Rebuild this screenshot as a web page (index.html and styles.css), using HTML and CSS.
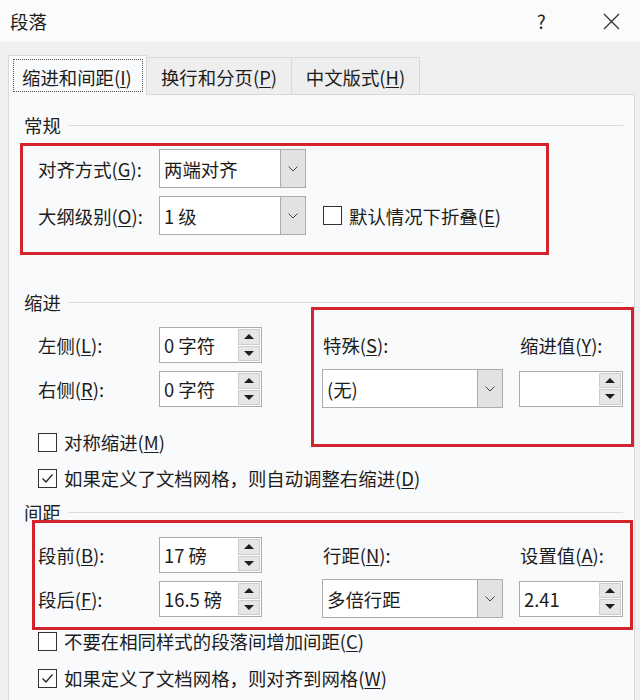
FILE: index.html
```html
<!DOCTYPE html>
<html lang="zh-CN">
<head>
<meta charset="utf-8">
<title>段落</title>
<link rel="stylesheet" href="styles.css">
</head>
<body>
<div class="titlebar">
  <span class="title">段落</span>
  <span class="help">?</span>
  <span class="close"><svg width="17" height="17" viewBox="0 0 17 17"><path d="M1 1 L16 16 M16 1 L1 16" stroke="#333" stroke-width="1.3" fill="none"/></svg></span>
</div>
<div class="tabstrip">
  <div class="tab active"><span class="focus">缩进和间距(<u>I</u>)</span></div>
  <div class="tab t2">换行和分页(<u>P</u>)</div>
  <div class="tab t3">中文版式(<u>H</u>)</div>
</div>
<div class="panel">
  <div class="group-title g1"><span>常规</span></div>
  <div class="frow gen first">
    <span class="lbl">对齐方式(<u>G</u>):</span>
    <div class="combo"><span class="val">两端对齐</span><span class="dd"><svg width="10" height="6" viewBox="0 0 10 6"><path d="M0.5 0.5 L5 5 L9.5 0.5" stroke="#444" stroke-width="1" fill="none"/></svg></span></div>
  </div>
  <div class="frow gen second">
    <span class="lbl">大纲级别(<u>O</u>):</span>
    <div class="combo"><span class="val">1 级</span><span class="dd"><svg width="10" height="6" viewBox="0 0 10 6"><path d="M0.5 0.5 L5 5 L9.5 0.5" stroke="#444" stroke-width="1" fill="none"/></svg></span></div>
    <span class="cb collapse"></span><span class="cbtext">默认情况下折叠(<u>E</u>)</span>
  </div>

  <div class="group-title g2"><span>缩进</span></div>
  <div class="block b-indent">
    <div class="leftcol">
      <div class="frow">
        <span class="lbl">左侧(<u>L</u>):</span>
        <div class="spin"><span class="val">0 字符</span><span class="btns"><span class="sb"><i class="up"></i></span><span class="sb"><i class="down"></i></span></span></div>
      </div>
      <div class="frow r2">
        <span class="lbl">右侧(<u>R</u>):</span>
        <div class="spin"><span class="val">0 字符</span><span class="btns"><span class="sb"><i class="up"></i></span><span class="sb"><i class="down"></i></span></span></div>
      </div>
    </div>
    <div class="rightcol">
      <span class="lbl2">特殊(<u>S</u>):</span>
      <span class="lbl2">缩进值(<u>Y</u>):</span>
      <div class="combo wide"><span class="val">(无)</span><span class="dd"><svg width="10" height="6" viewBox="0 0 10 6"><path d="M0.5 0.5 L5 5 L9.5 0.5" stroke="#444" stroke-width="1" fill="none"/></svg></span></div>
      <div class="spin small"><span class="val"></span><span class="btns"><span class="sb"><i class="up"></i></span><span class="sb"><i class="down"></i></span></span></div>
    </div>
  </div>
  <div class="crow c1"><span class="cb"></span><span class="cbtext">对称缩进(<u>M</u>)</span></div>
  <div class="crow c2"><span class="cb checked"><svg width="17" height="17" viewBox="0 0 17 17"><path d="M3.5 8.5 L7 12 L13.5 4.5" stroke="#222" stroke-width="1.2" fill="none"/></svg></span><span class="cbtext">如果定义了文档网格，则自动调整右缩进(<u>D</u>)</span></div>

  <div class="group-title g3"><span>间距</span></div>
  <div class="block b-space">
    <div class="leftcol">
      <div class="frow">
        <span class="lbl">段前(<u>B</u>):</span>
        <div class="spin"><span class="val">17 磅</span><span class="btns"><span class="sb"><i class="up"></i></span><span class="sb"><i class="down"></i></span></span></div>
      </div>
      <div class="frow r2">
        <span class="lbl">段后(<u>F</u>):</span>
        <div class="spin"><span class="val">16.5 磅</span><span class="btns"><span class="sb"><i class="up"></i></span><span class="sb"><i class="down"></i></span></span></div>
      </div>
    </div>
    <div class="rightcol">
      <span class="lbl2">行距(<u>N</u>):</span>
      <span class="lbl2">设置值(<u>A</u>):</span>
      <div class="combo wide"><span class="val">多倍行距</span><span class="dd"><svg width="10" height="6" viewBox="0 0 10 6"><path d="M0.5 0.5 L5 5 L9.5 0.5" stroke="#444" stroke-width="1" fill="none"/></svg></span></div>
      <div class="spin small"><span class="val">2.41</span><span class="btns"><span class="sb"><i class="up"></i></span><span class="sb"><i class="down"></i></span></span></div>
    </div>
  </div>
  <div class="crow c3"><span class="cb"></span><span class="cbtext">不要在相同样式的段落间增加间距(<u>C</u>)</span></div>
  <div class="crow c4"><span class="cb checked"><svg width="17" height="17" viewBox="0 0 17 17"><path d="M3.5 8.5 L7 12 L13.5 4.5" stroke="#222" stroke-width="1.2" fill="none"/></svg></span><span class="cbtext">如果定义了文档网格，则对齐到网格(<u>W</u>)</span></div>

  <div class="mark m1"></div>
  <div class="mark m2"></div>
  <div class="mark m3"></div>
</div>
</body>
</html>
```

FILE: styles.css
```css
* { box-sizing: border-box; }
html, body { margin: 0; padding: 0; }
body {
  width: 640px;
  height: 700px;
  overflow: hidden;
  background: #f0f0f0;
  font-family: "Noto Sans CJK SC", "Noto Sans", sans-serif;
  font-size: 18.4px;
  color: #1c1c1c;
}
u {
  text-decoration: underline;
  text-decoration-thickness: 1px;
  text-underline-offset: 2px;
}

/* title bar */
.titlebar {
  height: 42px;
  background: #fbfbfb;
  display: flex;
  align-items: center;
}
.title { flex: 1; padding-left: 10px; }
.help { width: 10px; margin-right: 56px; color: #222; }
.close { width: 17px; height: 17px; margin-right: 20px; display: flex; }

/* tabs */
.tabstrip {
  height: 52px;
  padding-left: 8px;
  display: flex;
  align-items: flex-end;
}
.tab {
  height: 37px;
  border: 1px solid #d9d9d9;
  border-bottom: none;
  border-left: none;
  background: #eeeeee;
  display: flex;
  align-items: center;
  justify-content: center;
  padding-top: 2px;
}
.tab.active {
  width: 139px;
  height: 40px;
  margin-bottom: -1px;
  border-left: 1px solid #d9d9d9;
  background: #f9fafb;
  position: relative;
  z-index: 1;
  padding: 2px 2px 3px 4px;
  justify-content: flex-start;
}
.focus {
  width: 130px;
  height: 33px;
  border: 1px dotted #555;
  display: flex;
  align-items: center;
  padding: 3px 0 0 8px;
}
.t2 { width: 145px; }
.t3 { width: 128px; }

/* panel */
.panel {
  margin-left: 8px;
  width: 627px;
  height: 640px;
  border: 1px solid #d9d9d9;
  background: #f9fafb;
  position: relative;
}
.group-title {
  display: flex;
  align-items: center;
  height: 24px;
  margin-left: 15px;
  width: 599px;
  color: #222;
}
.group-title::after {
  content: "";
  flex: 1;
  height: 1px;
  background: #dcdcdc;
  margin-left: 7px;
}
.g1 { margin-top: 18px; }
.g2 { margin-top: 55px; }
.g3 { margin-top: 10px; }

.frow {
  display: flex;
  align-items: center;
  height: 36px;
}
.frow.r2 { margin-top: 8px; }
.gen { height: 39px; padding-left: 29px; }
.gen.first { margin-top: 12px; }
.gen.second { margin-top: 8px; }
.lbl { width: 121px; flex: none; }

/* combobox */
.combo {
  width: 147px;
  height: 39px;
  border: 1px solid #acacac;
  background: #ffffff;
  display: flex;
  flex: none;
}
.combo.wide { width: 181px; }
.combo .val {
  flex: 1;
  padding-left: 4px;
  display: flex;
  align-items: center;
}
.dd {
  width: 25px;
  background: #e2e2e2;
  border-left: 1px solid #acacac;
  display: flex;
  align-items: center;
  justify-content: center;
}

/* spin box */
.spin {
  width: 103px;
  height: 36px;
  border: 1px solid #acacac;
  background: #ffffff;
  display: flex;
  align-items: stretch;
  flex: none;
}
.spin.small { width: 104px; }
.spin .val {
  flex: 1;
  padding-left: 4px;
  display: flex;
  align-items: center;
}
.btns {
  width: 23px;
  padding: 1px 1px 1px 0;
  display: flex;
  flex-direction: column;
  gap: 1px;
}
.sb {
  flex: 1;
  background: #e6e6e6;
  border: 1px solid #cdcdcd;
  display: flex;
  align-items: center;
  justify-content: center;
}
.sb i { display: block; width: 0; height: 0; }
.sb i.up {
  border-left: 5px solid transparent;
  border-right: 5px solid transparent;
  border-bottom: 5px solid #1e1e1e;
}
.sb i.down {
  border-left: 5px solid transparent;
  border-right: 5px solid transparent;
  border-top: 5px solid #1e1e1e;
}

/* blocks with two columns */
.block {
  display: flex;
  padding-left: 29px;
  margin-top: 13px;
}
.leftcol { width: 284px; flex: none; }
.rightcol {
  display: grid;
  grid-template-columns: 181px 104px;
  grid-template-rows: 36px 39px;
  column-gap: 16px;
  row-gap: 6px;
  align-items: center;
}
.lbl2 { display: flex; align-items: center; padding-left: 1px; }

/* checkboxes */
.cb {
  width: 19px;
  height: 19px;
  border: 1px solid #333;
  background: #ffffff;
  flex: none;
  display: flex;
  align-items: center;
  justify-content: center;
}
.cbtext { margin-left: 7px; }
.collapse { margin-left: 17px; }
.crow {
  display: flex;
  align-items: center;
  height: 24px;
  padding-left: 29px;
}
.c1 { margin-top: 22px; }
.c2 { margin-top: 12px; }
.c3 { margin-top: 11px; }
.c4 { margin-top: 13px; }

/* red annotation frames */
.mark {
  position: absolute;
  border: 3px solid #d3232b;
  pointer-events: none;
}
.m1 { left: 11px; top: 48px; width: 529px; height: 112px; }
.m2 { left: 302px; top: 212px; width: 323px; height: 140px; }
.m3 { left: 23px; top: 425px; width: 601px; height: 110px; }
```
